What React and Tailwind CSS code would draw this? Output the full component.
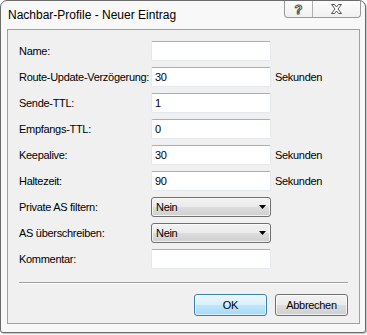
import React from "react";

const rows = [
  { label: "Name:", value: "" },
  { label: "Route-Update-Verzögerung:", value: "30", unit: "Sekunden" },
  { label: "Sende-TTL:", value: "1" },
  { label: "Empfangs-TTL:", value: "0" },
  { label: "Keepalive:", value: "30", unit: "Sekunden" },
  { label: "Haltezeit:", value: "90", unit: "Sekunden" },
  { label: "Private AS filtern:", select: "Nein" },
  { label: "AS überschreiben:", select: "Nein" },
  { label: "Kommentar:", value: "" },
];

function TextBox({ value }) {
  return (
    <div className="w-[120px] h-[20px] bg-white border border-[#e3e9ef] border-t-[#abadb3] rounded-[2px] flex items-center pl-[3px]">
      {value}
    </div>
  );
}

function Combo({ value }) {
  return (
    <div className="w-[120px] h-[20px] border border-[#707070] rounded-[3px] bg-[linear-gradient(#f2f2f2_0%,#ebebeb_50%,#dddddd_50%,#cfcfcf_100%)] shadow-[inset_0_0_0_1px_rgba(255,255,255,0.7)] flex items-center pl-[4px] pr-[3px]">
      <span>{value}</span>
      <svg className="ml-auto" width="8" height="5" viewBox="0 0 8 5">
        <path d="M0 0 H7 L3.5 4 Z" fill="#000" />
      </svg>
    </div>
  );
}

export default function App() {
  return (
    <div className="w-[367px] h-[335px] bg-white font-['Liberation_Sans',Arial,sans-serif] text-[11px] text-black">
      <div className="w-[366px] h-[333px] border border-[#6b6b6b] rounded-t-[7px] rounded-b-[3px] bg-[#f8f8f8] flex flex-col shadow-[1px_1px_1px_rgba(0,0,0,0.25)]">
        <div className="h-[28px] flex items-start pl-[7px] pr-[4px]">
          <div className="pt-[7px] text-[12px] leading-[14px]">Nachbar-Profile - Neuer Eintrag</div>
          <div className="ml-auto flex h-[17px] border border-t-0 border-[#9a9a9a] rounded-b-[4px] bg-[linear-gradient(#fdfdfd,#f0f0f0)] overflow-hidden">
            <div className="w-[28px] flex items-center justify-center border-r border-[#b0b0b0] text-[13px] font-bold text-white leading-none [-webkit-text-stroke:1px_#555]">
              ?
            </div>
            <div className="w-[47px] flex items-center justify-center">
              <svg width="13" height="10" viewBox="0 0 13 10">
                <path
                  d="M1.5 0.5 H4.5 L6.5 3 L8.5 0.5 H11.5 L8 5 L11.5 9.5 H8.5 L6.5 7 L4.5 9.5 H1.5 L5 5 Z"
                  fill="#fff"
                  stroke="#555"
                  strokeWidth="1"
                />
              </svg>
            </div>
          </div>
        </div>
        <div className="flex-1 mx-[6px] mr-[5px] mb-[8px] border border-[#a0a0a0] bg-[#f0f0f0] flex flex-col tracking-[-0.3px]">
          <div className="pt-[11px] pl-[11px] flex flex-col gap-[6px]">
            {rows.map((r) => (
              <div key={r.label} className="flex items-center h-[20px]">
                <div className="w-[132px] whitespace-nowrap">{r.label}</div>
                {r.select ? <Combo value={r.select} /> : <TextBox value={r.value} />}
                {r.unit && <div className="ml-[4px]">{r.unit}</div>}
              </div>
            ))}
          </div>
          <div className="mt-[13px] mx-[11px] border-t border-[#a0a0a0] border-b border-b-white" />
          <div className="mt-[10px] pr-[11px] flex justify-end gap-[8px]">
            <button className="w-[73px] h-[22px] border border-[#3c7fb1] rounded-[3px] bg-[linear-gradient(#eaf6fd_0%,#d9f0fc_50%,#bee6fd_50%,#a7d9f5_100%)] shadow-[inset_0_0_0_1px_rgba(255,255,255,0.6)] text-[11px]">
              OK
            </button>
            <button className="w-[73px] h-[22px] border border-[#707070] rounded-[3px] bg-[linear-gradient(#f2f2f2_0%,#ebebeb_50%,#dddddd_50%,#cfcfcf_100%)] shadow-[inset_0_0_0_1px_rgba(255,255,255,0.7)] text-[11px]">
              Abbrechen
            </button>
          </div>
        </div>
      </div>
    </div>
  );
}
